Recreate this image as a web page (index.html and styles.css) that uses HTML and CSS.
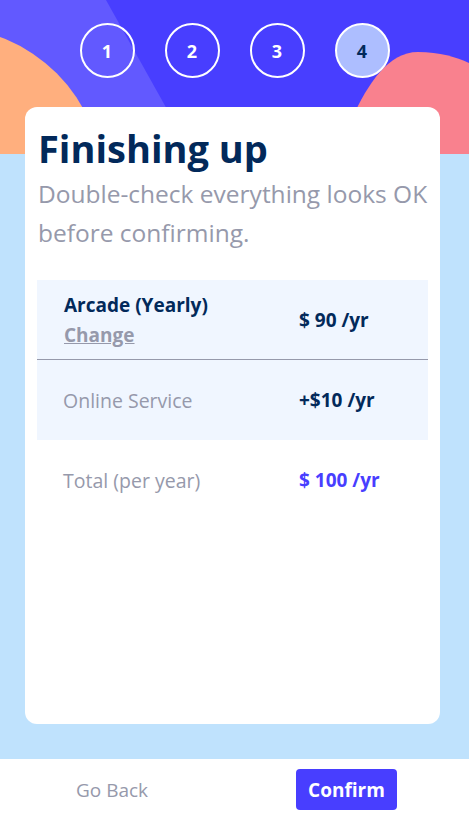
FILE: index.html
```html
<!DOCTYPE html>
<html lang="en">
<head>
<meta charset="utf-8">
<title>Finishing up</title>
<link rel="stylesheet" href="styles.css">
</head>
<body>
<div class="page">
  <header class="top">
    <svg class="deco" viewBox="0 0 469 154" width="469" height="154" aria-hidden="true">
      <rect x="0" y="0" width="469" height="154" fill="#483EFF"/>
      <polygon points="0,0 106,0 192,154 0,154" fill="#6259FF"/>
      <circle cx="-55" cy="185" r="158" fill="#FFAF7E"/>
      <path d="M350,154 L352,118 C368,84 388,52 418,52 C440,52 456,57 469,63 L469,154 Z" fill="#F9818E"/>
    </svg>
    <ol class="steps">
      <li class="step">1</li>
      <li class="step">2</li>
      <li class="step">3</li>
      <li class="step active">4</li>
    </ol>
  </header>
  <main class="main">
    <section class="card">
      <h1 class="title">Finishing up</h1>
      <p class="subtitle">Double-check everything looks OK before confirming.</p>
      <div class="summary">
        <div class="row plan">
          <div class="label">
            <div class="plan-name">Arcade (Yearly)</div>
            <a class="change" href="#">Change</a>
          </div>
          <div class="price">$ 90 /yr</div>
        </div>
        <div class="row addon">
          <div class="label muted">Online Service</div>
          <div class="price">+$10 /yr</div>
        </div>
      </div>
      <div class="row total">
        <div class="label muted">Total (per year)</div>
        <div class="price accent">$ 100 /yr</div>
      </div>
    </section>
  </main>
  <footer class="footer">
    <button class="back" type="button">Go Back</button>
    <button class="confirm" type="button">Confirm</button>
  </footer>
</div>
</body>
</html>
```

FILE: styles.css
```css
* { box-sizing: border-box; }
html, body { margin: 0; padding: 0; }
body {
  font-family: "Open Sans", "Noto Sans", sans-serif;
  background: #BFE2FD;
  width: 469px;
  height: 820px;
  overflow: hidden;
}
.page {
  display: flex;
  flex-direction: column;
  height: 820px;
}
.top {
  position: relative;
  height: 154px;
  flex: none;
  overflow: hidden;
}
.deco {
  position: absolute;
  left: 0;
  top: 0;
  display: block;
}
.steps {
  position: relative;
  list-style: none;
  margin: 0;
  padding: 23px 0 0 0;
  display: flex;
  justify-content: center;
  gap: 30px;
}
.step {
  width: 55px;
  height: 55px;
  border: 2px solid #fff;
  border-radius: 50%;
  display: flex;
  align-items: center;
  justify-content: center;
  color: #fff;
  font-weight: 700;
  font-size: 18px;
}
.step.active {
  background: #ADBEFF;
  color: #02295A;
}
.main {
  flex: 1;
  background: #BFE2FD;
  padding: 0 29px 35px 25px;
  display: flex;
}
.card {
  margin-top: -47px;
  flex: 1;
  background: #fff;
  border-radius: 12px;
  padding: 15px 12px 0 12px;
  position: relative;
}
.title {
  margin: 0;
  padding-left: 1px;
  color: #02295A;
  font-size: 38px;
  font-weight: 700;
  line-height: 52px;
}
.subtitle {
  margin: 0;
  padding-left: 1px;
  color: #9699AB;
  font-size: 24.5px;
  line-height: 39px;
  font-weight: 500;
}
.summary {
  margin-top: 28px;
  background: #F0F6FF;
}
.row {
  display: grid;
  grid-template-columns: 235px 1fr;
  align-items: center;
  height: 80px;
  padding-left: 27px;
}
.plan {
  border-bottom: 1px solid #9699AB;
}
.label {
  display: flex;
  flex-direction: column;
  align-items: flex-start;
}
.plan-name {
  color: #02295A;
  font-weight: 700;
  font-size: 19px;
  line-height: 30px;
}
.change {
  color: #9699AB;
  font-weight: 700;
  font-size: 19px;
  line-height: 30px;
  text-decoration: underline;
}
.muted {
  color: #9699AB;
  font-size: 19.5px;
  margin-left: -1px;
}
.price {
  color: #02295A;
  font-weight: 700;
  font-size: 19px;
}
.accent { color: #483EFF; }
.footer {
  flex: none;
  height: 61px;
  background: #fff;
  display: flex;
  align-items: center;
  justify-content: space-between;
  padding: 0 72px 0 76px;
}
.back {
  border: none;
  background: none;
  padding: 0;
  font-family: inherit;
  font-size: 19px;
  color: #9699AB;
  cursor: pointer;
}
.confirm {
  border: none;
  background: #483EFF;
  color: #fff;
  font-family: inherit;
  font-weight: 700;
  font-size: 19px;
  width: 101px;
  height: 41px;
  border-radius: 4px;
  cursor: pointer;
}
```
